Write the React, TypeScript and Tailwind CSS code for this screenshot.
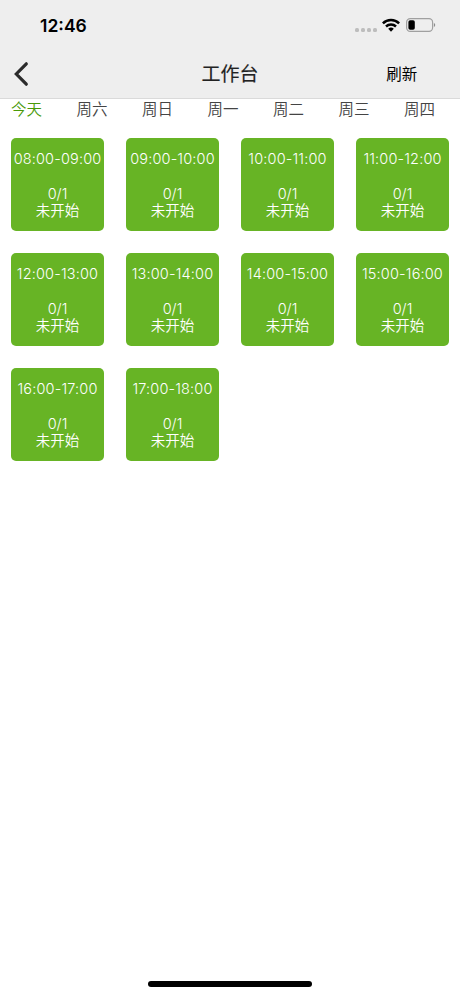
const days = ['今天', '周六', '周日', '周一', '周二', '周三', '周四'];

const slots = [
  '08:00-09:00',
  '09:00-10:00',
  '10:00-11:00',
  '11:00-12:00',
  '12:00-13:00',
  '13:00-14:00',
  '14:00-15:00',
  '15:00-16:00',
  '16:00-17:00',
  '17:00-18:00',
];

function StatusBar() {
  return (
    <div className="flex h-[50px] items-center justify-between pl-10 pr-[24px] pt-px">
      <span className="text-[17.5px] font-semibold leading-6 text-black">12:46</span>
      <div className="flex items-center">
        <div className="mr-[5px] mt-[9px] flex gap-[2px]">
          {[0, 1, 2, 3].map((i) => (
            <span key={i} className="size-1 rounded-[1.5px] bg-[#bdbdbd]" />
          ))}
        </div>
        <svg width="18" height="14" viewBox="0 0 18 14" className="mr-[6px] -mt-px">
          <g fill="none" stroke="black" strokeWidth="2.5">
            <path d="M.9 5.3a11.6 11.6 0 0 1 16.2 0" />
            <path d="M4 8.5a7.3 7.3 0 0 1 10 0" />
          </g>
          <path d="M6.2 10.8a4 4 0 0 1 5.6 0L9 13.7z" fill="black" />
        </svg>
        <svg width="30" height="14" viewBox="0 0 30 14" className="-mt-px">
          <rect x=".6" y=".6" width="26" height="12.8" rx="3.6" fill="none" stroke="#a0a0a0" strokeWidth="1.2" />
          <rect x="2.4" y="2.3" width="6.4" height="9.4" rx="1.8" fill="black" />
          <path d="M27.9 4.9v4.2c1.8-.7 1.8-3.5 0-4.2z" fill="#8e8e8e" />
        </svg>
      </div>
    </div>
  );
}

export default function App() {
  return (
    <div className="relative h-[996px] w-[460px] overflow-hidden bg-white font-['Inter','Noto_Sans_CJK_SC',sans-serif]">
      <header className="h-[99px] border-b border-[#dadada] bg-[#eeeeee]">
        <StatusBar />
        <div className="grid h-[48px] grid-cols-3 items-center">
          <button className="pl-[13px]">
            <svg
              width="16"
              height="26"
              viewBox="0 0 16 26"
              fill="none"
              stroke="#2b2b2b"
              strokeWidth="3.2"
              strokeLinecap="round"
            >
              <path d="M13.3 2.8 3.3 13l10 10.2" />
            </svg>
          </button>
          <h1 className="pt-[2px] text-center text-[19px] font-normal text-[#222] [-webkit-text-stroke:0.15px_#222]">
            工作台
          </h1>
          <button className="pl-[37px] pt-[2px] text-center text-[15.5px] text-black">刷新</button>
        </div>
      </header>
      <nav className="flex h-[20px] justify-between pl-[11px] pr-[25px] pt-px text-[15.5px] font-[350] leading-[20px] text-[#444]">
        {days.map((day, i) => (
          <span key={day} className={i === 0 ? 'text-[#4a9a08]' : ''}>
            {day}
          </span>
        ))}
      </nav>
      <main className="mt-[19px] grid grid-cols-[repeat(4,93px)] gap-[22px] px-[11px]">
        {slots.map((slot) => (
          <div
            key={slot}
            className="h-[93px] whitespace-nowrap rounded-[5px] bg-[#67b425] pt-[12px] text-center text-[14.5px] font-[350] leading-[17.5px] text-white"
          >
            <p className="tracking-[0.15px]">{slot}</p>
            <p className="mt-[17px]">0/1</p>
            <p>未开始</p>
          </div>
        ))}
      </main>
      <div className="absolute bottom-[9px] left-[148px] h-[6px] w-[164px] rounded-full bg-black" />
    </div>
  );
}
